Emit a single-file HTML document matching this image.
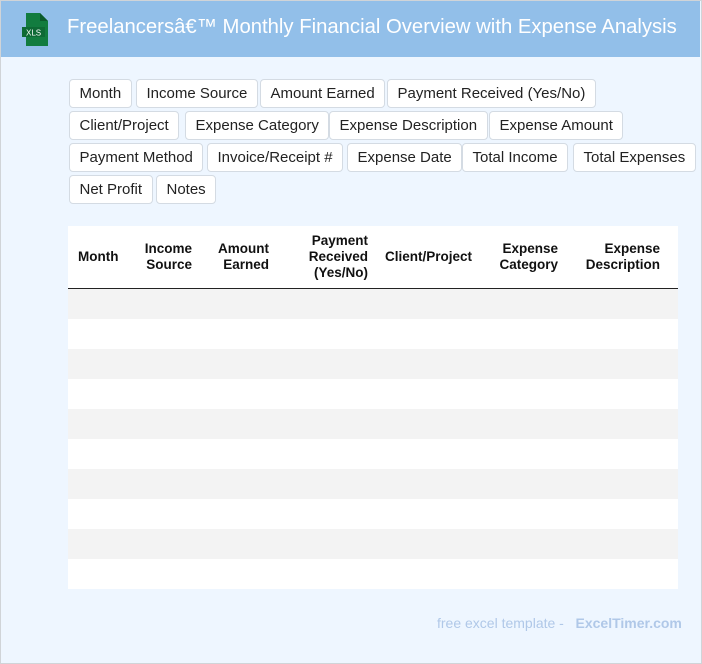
<!DOCTYPE html>
<html><head><meta charset="utf-8"><style>
*{box-sizing:border-box;margin:0;padding:0}
body{width:702px;height:664px;background:#eef6ff;font-family:"Liberation Sans",Roboto,sans-serif;position:relative;overflow:hidden}
.brd{position:absolute;left:0;top:0;width:702px;height:664px;border:1px solid #d0d4d8;pointer-events:none}
.hdr{position:absolute;left:1px;top:1px;width:699px;height:56px;background:#92bfe9}
.hdr .t{position:absolute;left:66px;top:15px;color:#fff;font-size:20.3px}
.tag{position:absolute;height:29px;border:1px solid #d4dbe3;border-radius:4px;background:#fff;font-size:15px;color:#222;line-height:27px;padding:0 9.5px;white-space:nowrap}
.tbl{position:absolute;left:68px;top:226px;width:610px;height:363px;background:#fff}
.th{position:absolute;font-weight:bold;font-size:13.5px;color:#111;text-align:right;line-height:16px}
.line{position:absolute;left:0;top:62px;width:610px;height:1px;background:#222}
.row{position:absolute;left:0;width:610px;height:30px;background:#f3f3f3}
.foot{position:absolute;top:615px;left:437px;font-size:14px;color:#b0c8e8}
</style></head><body>
<div class="hdr">
<svg style="position:absolute;left:20px;top:12px" width="30" height="33" viewBox="0 0 30 33"><path d="M5 0h14l8 8v25H5z" fill="#127c3f"/><path d="M19 0v8h8z" fill="#0b5a2c"/><rect x="1" y="14" width="23" height="10" fill="#0e6a35"/><text x="5" y="22.5" font-size="8" fill="#fff" font-family="Liberation Sans">XLS</text></svg>
<div class="t">Freelancersâ€™ Monthly Financial Overview with Expense Analysis</div>
</div>
<div class="tag" style="left:69px;top:79px">Month</div>
<div class="tag" style="left:136px;top:79px">Income Source</div>
<div class="tag" style="left:260px;top:79px">Amount Earned</div>
<div class="tag" style="left:387px;top:79px">Payment Received (Yes/No)</div>
<div class="tag" style="left:69px;top:111px">Client/Project</div>
<div class="tag" style="left:185px;top:111px">Expense Category</div>
<div class="tag" style="left:329px;top:111px">Expense Description</div>
<div class="tag" style="left:489px;top:111px">Expense Amount</div>
<div class="tag" style="left:69px;top:143px">Payment Method</div>
<div class="tag" style="left:207px;top:143px">Invoice/Receipt #</div>
<div class="tag" style="left:347px;top:143px">Expense Date</div>
<div class="tag" style="left:462px;top:143px">Total Income</div>
<div class="tag" style="left:573px;top:143px">Total Expenses</div>
<div class="tag" style="left:69px;top:175px">Net Profit</div>
<div class="tag" style="left:156px;top:175px">Notes</div>
<div class="tbl">
<div class="th" style="left:10px;top:23px;text-align:left">Month</div>
<div class="th" style="right:486px;top:15px">Income<br>Source</div>
<div class="th" style="right:409px;top:15px">Amount<br>Earned</div>
<div class="th" style="right:310px;top:7px">Payment<br>Received<br>(Yes/No)</div>
<div class="th" style="right:206px;top:23px">Client/Project</div>
<div class="th" style="right:120px;top:15px">Expense<br>Category</div>
<div class="th" style="right:18px;top:15px">Expense<br>Description</div>
<div class="line"></div>
<div class="row" style="top:63px"></div>
<div class="row" style="top:123px"></div>
<div class="row" style="top:183px"></div>
<div class="row" style="top:243px"></div>
<div class="row" style="top:303px"></div>
</div>
<div class="foot">free excel template - &nbsp;&nbsp;<b>ExcelTimer.com</b></div>
<div class="brd"></div>
</body></html>
